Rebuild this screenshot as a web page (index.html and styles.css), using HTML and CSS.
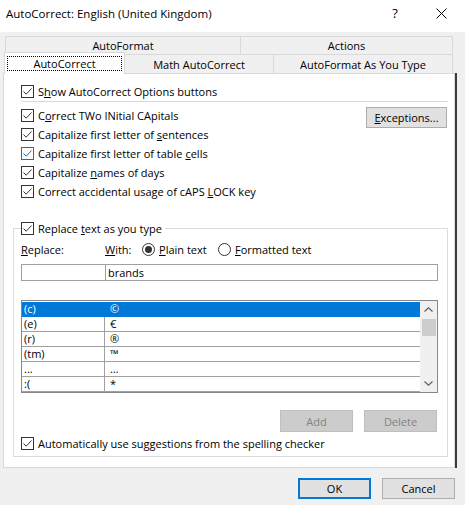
FILE: index.html
```html
<!DOCTYPE html>
<html>
<head>
<meta charset="utf-8">
<link rel="stylesheet" href="styles.css">
</head>
<body>
<div class="window">
  <div class="titlebar">
    <div class="title">AutoCorrect: English (United Kingdom)</div>
    <div class="tb-btn help">?</div>
    <div class="tb-btn close"><svg width="11" height="11" viewBox="0 0 11 11"><path d="M0.5 0.5 L10.5 10.5 M10.5 0.5 L0.5 10.5" stroke="#000" stroke-width="1" fill="none"/></svg></div>
  </div>

  <div class="tabs">
    <div class="tabrow row1">
      <div class="tab t-autoformat">AutoFormat</div>
      <div class="tab t-actions last">Actions</div>
    </div>
    <div class="tabrow row2">
      <div class="tab sel"><span class="focus">AutoCorrect</span></div>
      <div class="tab t-math">Math AutoCorrect</div>
      <div class="tab t-afayt last">AutoFormat As You Type</div>
    </div>
  </div>

  <div class="panel">
    <div class="check-row">
      <svg class="cb" width="13" height="13" viewBox="0 0 13 13"><rect x="0.5" y="0.5" width="12" height="12" fill="#fff" stroke="#333"/><path d="M2.5 6.5 L5.2 9.2 L10.5 3.5" fill="none" stroke="#333"/></svg>
      <span>S<u>h</u>ow AutoCorrect Options buttons</span>
    </div>
    <div class="sep"></div>
    <div class="options">
      <div class="opt-list">
        <div class="check-row">
          <svg class="cb" width="13" height="13" viewBox="0 0 13 13"><rect x="0.5" y="0.5" width="12" height="12" fill="#fff" stroke="#333"/><path d="M2.5 6.5 L5.2 9.2 L10.5 3.5" fill="none" stroke="#333"/></svg>
          <span>C<u>o</u>rrect TWo INitial CApitals</span>
        </div>
        <div class="check-row">
          <svg class="cb" width="13" height="13" viewBox="0 0 13 13"><rect x="0.5" y="0.5" width="12" height="12" fill="#fff" stroke="#333"/><path d="M2.5 6.5 L5.2 9.2 L10.5 3.5" fill="none" stroke="#333"/></svg>
          <span>Capitalize first letter of <u>s</u>entences</span>
        </div>
        <div class="check-row">
          <svg class="cb" width="13" height="13" viewBox="0 0 13 13"><rect x="0.5" y="0.5" width="12" height="12" fill="#fff" stroke="#0078d7"/><path d="M2.5 6.5 L5.2 9.2 L10.5 3.5" fill="none" stroke="#0078d7"/></svg>
          <span>Capitalize first letter of table <u>c</u>ells</span>
        </div>
        <div class="check-row">
          <svg class="cb" width="13" height="13" viewBox="0 0 13 13"><rect x="0.5" y="0.5" width="12" height="12" fill="#fff" stroke="#333"/><path d="M2.5 6.5 L5.2 9.2 L10.5 3.5" fill="none" stroke="#333"/></svg>
          <span>Capitalize <u>n</u>ames of days</span>
        </div>
        <div class="check-row">
          <svg class="cb" width="13" height="13" viewBox="0 0 13 13"><rect x="0.5" y="0.5" width="12" height="12" fill="#fff" stroke="#333"/><path d="M2.5 6.5 L5.2 9.2 L10.5 3.5" fill="none" stroke="#333"/></svg>
          <span>Correct accidental usage of cAPS <u>L</u>OCK key</span>
        </div>
      </div>
      <div class="btn exceptions"><u>E</u>xceptions...</div>
    </div>

    <fieldset class="group">
      <legend class="check-row legend">
        <svg class="cb" width="13" height="13" viewBox="0 0 13 13"><rect x="0.5" y="0.5" width="12" height="12" fill="#fff" stroke="#333"/><path d="M2.5 6.5 L5.2 9.2 L10.5 3.5" fill="none" stroke="#333"/></svg>
        <span>Replace <u>t</u>ext as you type</span>
      </legend>
      <div class="labels">
        <span class="lbl-replace"><u>R</u>eplace:</span>
        <span class="lbl-with"><u>W</u>ith:</span>
        <span class="radio-opt first">
          <svg width="13" height="13" viewBox="0 0 13 13"><circle cx="6.5" cy="6.5" r="6" fill="#fff" stroke="#333"/><circle cx="6.5" cy="6.5" r="3.5" fill="#333"/></svg>
          <span><u>P</u>lain text</span>
        </span>
        <span class="radio-opt">
          <svg width="13" height="13" viewBox="0 0 13 13"><circle cx="6.5" cy="6.5" r="6" fill="#fff" stroke="#333"/></svg>
          <span><u>F</u>ormatted text</span>
        </span>
      </div>
      <div class="inputs">
        <div class="input in-replace"></div>
        <div class="input in-with">brands</div>
      </div>
      <div class="list">
        <div class="rows">
          <div class="row selected"><div class="c1">(c)</div><div class="c2">©</div></div>
          <div class="row"><div class="c1">(e)</div><div class="c2">€</div></div>
          <div class="row"><div class="c1">(r)</div><div class="c2">®</div></div>
          <div class="row"><div class="c1">(tm)</div><div class="c2">™</div></div>
          <div class="row"><div class="c1">...</div><div class="c2">…</div></div>
          <div class="row"><div class="c1">:(</div><div class="c2">*</div></div>
        </div>
        <div class="scrollbar">
          <div class="arrow"><svg width="9" height="5" viewBox="0 0 9 5"><path d="M0.5 4.5 L4.5 0.8 L8.5 4.5" fill="none" stroke="#606060" stroke-width="1.2"/></svg></div>
          <div class="thumb"></div>
          <div class="track"></div>
          <div class="arrow"><svg width="9" height="5" viewBox="0 0 9 5"><path d="M0.5 0.5 L4.5 4.2 L8.5 0.5" fill="none" stroke="#606060" stroke-width="1.2"/></svg></div>
        </div>
      </div>
      <div class="list-buttons">
        <div class="btn disabled">Add</div>
        <div class="btn disabled">Delete</div>
      </div>
      <div class="check-row auto">
        <svg class="cb" width="13" height="13" viewBox="0 0 13 13"><rect x="0.5" y="0.5" width="12" height="12" fill="#fff" stroke="#333"/><path d="M2.5 6.5 L5.2 9.2 L10.5 3.5" fill="none" stroke="#333"/></svg>
        <span>Automatically use su<u>g</u>gestions from the spelling checker</span>
      </div>
    </fieldset>
  </div>

  <div class="footer">
    <div class="btn ok">OK</div>
    <div class="btn cancel">Cancel</div>
  </div>
</div>
</body>
</html>
```

FILE: styles.css
```css
* { box-sizing: border-box; }

body {
  margin: 0;
  background: #f0f0f0;
  font-family: "Open Sans", "Noto Sans", sans-serif;
  font-size: 11px;
  color: #000;
}

.window {
  width: 465px;
  height: 505px;
  overflow: hidden;
}

u { text-decoration: underline; text-underline-offset: 1px; }

/* title bar */
.titlebar {
  height: 32px;
  padding-bottom: 6px;
  padding-right: 1px;
  background: #fff;
  display: flex;
  align-items: center;
}
.title {
  flex: 1;
  padding-left: 6px;
  font-size: 11.5px;
}
.tb-btn {
  width: 46px;
  height: 26px;
  display: flex;
  align-items: center;
  justify-content: center;
}
.help { font-size: 13px; }

/* tabs */
.tabs {
  margin: 4px 0 0 5px;
  width: 448px;
}
.tabrow { display: flex; }
.row1 { height: 18px; }
.row2 { height: 19px; }
.tab {
  border-top: 1px solid #d9d9d9;
  border-left: 1px solid #d9d9d9;
  display: flex;
  align-items: center;
  justify-content: center;
  white-space: nowrap;
}
.tab.last { border-right: 1px solid #d9d9d9; }
.t-autoformat { width: 235px; }
.t-actions { width: 213px; }
.tab.sel {
  width: 121px;
  height: 22px;
  margin-left: -1px;
  margin-top: -2px;
  background: #fff;
  border-right: 1px solid #d9d9d9;
  align-items: flex-start;
  justify-content: flex-start;
  padding: 3px 0 0 2px;
  position: relative;
  z-index: 1;
}
.focus {
  width: 115px;
  height: 15px;
  border: 1px dotted #000;
  display: flex;
  align-items: center;
  justify-content: center;
}
.t-math { width: 148px; border-left: none; }
.t-afayt { width: 180px; }

/* panel */
.panel {
  margin-left: 3px;
  width: 452px;
  height: 395px;
  background: #fff;
  border: 1px solid #d9d9d9;
  box-shadow: 2px 0 0 #3c3c3c;
  padding: 8px 6px 0 17px;
}
.check-row {
  display: flex;
  align-items: center;
  gap: 4px;
  height: 19px;
  white-space: nowrap;
}
.cb { flex: none; display: block; }
.sep {
  height: 1px;
  background: #dadada;
  margin-bottom: 4px;
}
.options {
  display: flex;
  justify-content: space-between;
  align-items: flex-start;
}
.btn {
  display: flex;
  align-items: center;
  justify-content: center;
  background: #e1e1e1;
  border: 1px solid #adadad;
  white-space: nowrap;
}
.exceptions {
  width: 81px;
  height: 21px;
  margin: 1px 1px 0 0;
}

/* group */
.group {
  margin: 18px 0 0 -8px;
  padding: 3px 9px 3px 7px;
  border: 1px solid #dcdcdc;
  min-width: 0;
}
.legend {
  padding: 0 3px 0 0;
  margin: 0;
}
.labels {
  display: flex;
  align-items: center;
  height: 17px;
}
.lbl-replace { width: 84px; }
.lbl-with { width: 37px; }
.radio-opt {
  display: flex;
  align-items: center;
  gap: 4px;
}
.radio-opt svg { display: block; }
.radio-opt.first { width: 76px; }

.inputs {
  display: flex;
  margin-top: 6px;
  height: 17px;
}
.input {
  height: 17px;
  border: 1px solid #a0a0a0;
  display: flex;
  align-items: center;
  background: #fff;
}
.in-replace { width: 85px; }
.in-with {
  width: 333px;
  margin-left: -1px;
  padding-left: 2px;
}

.list {
  margin-top: 19px;
  height: 93px;
  width: 417px;
  border: 1px solid #828790;
  display: flex;
}
.rows {
  flex: 1;
  padding-top: 1px;
}
.row {
  display: flex;
  height: 15px;
  border-bottom: 1px solid #a0a0a0;
  line-height: 14px;
}
.c1 {
  width: 83px;
  padding-left: 2px;
  border-right: 1px solid #a0a0a0;
}
.c2 {
  flex: 1;
  padding-left: 5px;
}
.row.selected {
  background: #0078d7;
  color: #fff;
  border-bottom-color: #0078d7;
}
.row.selected .c1 { border-right-color: #0078d7; }

.scrollbar {
  width: 17px;
  background: #f0f0f0;
  display: flex;
  flex-direction: column;
}
.arrow {
  height: 17px;
  display: flex;
  align-items: center;
  justify-content: center;
}
.arrow svg { display: block; }
.thumb {
  height: 17px;
  margin: 1px 1px 0 2px;
  background: #cdcdcd;
}
.track { flex: 1; }

.list-buttons {
  display: flex;
  justify-content: flex-end;
  gap: 11px;
  margin: 17px 1px 0 0;
}
.btn.disabled {
  width: 73px;
  height: 22px;
  background: #cccccc;
  border-color: #bfbfbf;
  color: #838383;
}
.auto { margin-top: 2px; }

/* footer */
.footer {
  display: flex;
  justify-content: flex-end;
  gap: 11px;
  padding-right: 10px;
  margin-top: 10px;
}
.footer .btn {
  width: 73px;
  height: 21px;
}
.btn.ok { border: 2px solid #0078d7; }
```
